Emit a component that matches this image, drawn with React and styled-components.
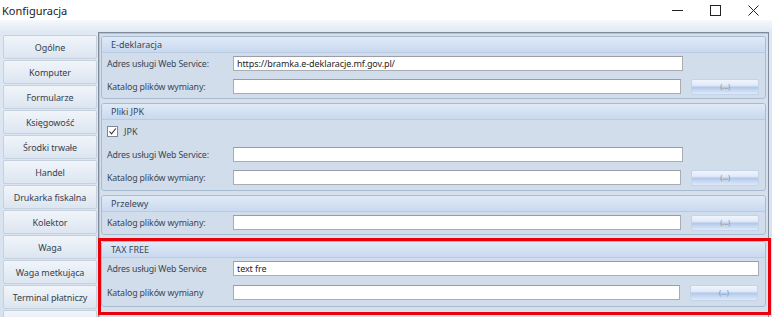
import React from 'react';
import styled, { createGlobalStyle } from 'styled-components';

const GlobalStyle = createGlobalStyle`
  html, body {
    margin: 0;
    padding: 0;
    background: #fff;
    overflow: hidden;
  }
  body {
    font-family: "Noto Sans", "Open Sans", sans-serif;
    color: #3a3f47;
  }
`;

const Window = styled.div`
  width: 772px;
  height: 317px;
  display: flex;
  flex-direction: column;
  overflow: hidden;
`;

const TitleBar = styled.div`
  height: 20px;
  flex-shrink: 0;
  display: flex;
  align-items: center;
  justify-content: space-between;
  background: #fff;
`;

const Title = styled.div`
  padding-left: 2px;
  font-size: 11px;
  color: #1a1a1a;
`;

const Controls = styled.div`
  display: flex;
  align-items: center;
  height: 100%;
`;

const ControlButton = styled.div`
  width: 38px;
  height: 100%;
  display: flex;
  align-items: center;
  justify-content: center;
`;

const Body = styled.div`
  flex: 1;
  display: flex;
  align-items: flex-start;
  gap: 1px;
  padding: 12px 0 0 3px;
  background: linear-gradient(#f6f9fc 0px, #dfe8f3 12px, #d7e2ef 100%);
  overflow: hidden;
`;

const Nav = styled.div`
  width: 94px;
  flex-shrink: 0;
  margin-top: 3px;
  display: flex;
  flex-direction: column;
  gap: 1px;
`;

const NavButton = styled.div`
  height: 24px;
  box-sizing: border-box;
  border: 1px solid #c5d1df;
  border-radius: 2px;
  background: linear-gradient(#f1f5fa, #dce5f0);
  display: flex;
  align-items: center;
  justify-content: center;
  font-size: 9px;
  letter-spacing: -0.1px;
  color: #36434f;
  white-space: nowrap;
`;

const Frame = styled.div`
  width: 671px;
  height: 300px;
  box-sizing: border-box;
  flex-shrink: 0;
  border: 1px solid #7f8b9a;
  box-shadow: inset 1px 1px 0 #b7c3d1;
  padding: 3px 2px;
  background: #d6e0ed;
  display: flex;
  flex-direction: column;
  gap: 4px;
`;

const Section = styled.div`
  box-sizing: border-box;
  flex-shrink: 0;
  border: 1px solid #a9bbd1;
  border-radius: 3px;
  background: #d2ddeb;
  overflow: hidden;
`;

const SectionHeader = styled.div`
  height: 15px;
  padding-left: 9px;
  display: flex;
  align-items: center;
  background: linear-gradient(#e0eaf7, #c9d9ef);
  border-bottom: 1px solid #b9cbe2;
  font-size: 9px;
  color: #3a4654;
`;

const SectionBody = styled.div`
  display: flex;
  flex-direction: column;
  gap: ${(p) => p.$gap || 8}px;
  padding: 3px 6px ${(p) => p.$bottom || 4}px 5px;
`;

const Row = styled.div`
  display: flex;
  align-items: center;
  height: 15px;
`;

const Label = styled.div`
  width: 126px;
  flex-shrink: 0;
  font-size: 8.8px;
  letter-spacing: -0.15px;
  color: #3a4654;
  white-space: nowrap;
`;

const Input = styled.div`
  width: ${(p) => p.$w}px;
  height: 15px;
  box-sizing: border-box;
  border: 1px solid #a9acb2;
  border-top-color: #9a9da3;
  background: #fff;
  font-size: 9px;
  letter-spacing: -0.1px;
  color: #1f1f1f;
  padding-left: 3px;
  display: flex;
  align-items: center;
  white-space: nowrap;
`;

const BrowseButton = styled.div`
  width: 68px;
  height: 16px;
  margin-left: 10px;
  box-sizing: border-box;
  border: 1px solid #c3d3e8;
  border-radius: 2px;
  background: linear-gradient(#f0f5fc 0%, #e1eaf8 38%, #b2c8ea 52%, #c4d6f0 70%, #dfe8f7 100%);
  display: flex;
  align-items: center;
  justify-content: center;
  font-size: 7px;
  color: #7d8da5;
`;

const CheckRow = styled.div`
  display: flex;
  align-items: center;
  gap: 6px;
  height: 16px;
  font-size: 9px;
  color: #3a4654;
`;

const CheckBox = styled.div`
  width: 11px;
  height: 11px;
  box-sizing: border-box;
  border: 1px solid #7b8898;
  background: #fff;
  display: flex;
  align-items: center;
  justify-content: center;
`;

const Highlight = styled.div`
  flex-shrink: 0;
  border: 3px solid #e8000b;
  margin: -1px -5px 0 -3px;
  padding: 0 2px 5px 0;
`;

const navItems = [
  'Ogólne',
  'Komputer',
  'Formularze',
  'Księgowość',
  'Środki trwałe',
  'Handel',
  'Drukarka fiskalna',
  'Kolektor',
  'Waga',
  'Waga metkująca',
  'Terminal płatniczy',
  '',
];

const App = () => {
  return (
    <Window>
      <GlobalStyle />
      <TitleBar>
        <Title>Konfiguracja</Title>
        <Controls>
          <ControlButton>
            <svg width="11" height="11" viewBox="0 0 11 11">
              <line x1="0" y1="5.5" x2="11" y2="5.5" stroke="#222" strokeWidth="1" />
            </svg>
          </ControlButton>
          <ControlButton>
            <svg width="11" height="11" viewBox="0 0 11 11">
              <rect x="0.5" y="0.5" width="10" height="10" fill="none" stroke="#222" strokeWidth="1" />
            </svg>
          </ControlButton>
          <ControlButton>
            <svg width="11" height="11" viewBox="0 0 11 11">
              <path d="M0.5 0.5 L10.5 10.5 M10.5 0.5 L0.5 10.5" stroke="#222" strokeWidth="1" />
            </svg>
          </ControlButton>
        </Controls>
      </TitleBar>
      <Body>
        <Nav>
          {navItems.map((item, i) => (
            <NavButton key={i}>{item}</NavButton>
          ))}
        </Nav>
        <Frame>
          <Section>
            <SectionHeader>E-deklaracja</SectionHeader>
            <SectionBody>
              <Row>
                <Label>Adres usługi Web Service:</Label>
                <Input $w={450}>https://bramka.e-deklaracje.mf.gov.pl/</Input>
              </Row>
              <Row>
                <Label>Katalog plików wymiany:</Label>
                <Input $w={450} />
                <BrowseButton>(...)</BrowseButton>
              </Row>
            </SectionBody>
          </Section>

          <Section>
            <SectionHeader>Pliki JPK</SectionHeader>
            <SectionBody $bottom={5}>
              <CheckRow>
                <CheckBox>
                  <svg width="9" height="9" viewBox="0 0 9 9">
                    <path d="M1.5 4.5 L3.5 6.8 L7.8 1.5" fill="none" stroke="#333" strokeWidth="1.1" />
                  </svg>
                </CheckBox>
                JPK
              </CheckRow>
              <Row>
                <Label>Adres usługi Web Service:</Label>
                <Input $w={450} />
              </Row>
              <Row>
                <Label>Katalog plików wymiany:</Label>
                <Input $w={450} />
                <BrowseButton>(...)</BrowseButton>
              </Row>
            </SectionBody>
          </Section>

          <Section>
            <SectionHeader>Przelewy</SectionHeader>
            <SectionBody $bottom={4}>
              <Row>
                <Label>Katalog plików wymiany:</Label>
                <Input $w={450} />
                <BrowseButton>(...)</BrowseButton>
              </Row>
            </SectionBody>
          </Section>

          <Highlight>
            <Section>
              <SectionHeader>TAX FREE</SectionHeader>
              <SectionBody $gap={9} $bottom={6}>
                <Row>
                  <Label>Adres usługi Web Service</Label>
                  <Input $w={527}>text fre</Input>
                </Row>
                <Row>
                  <Label>Katalog plików wymiany</Label>
                  <Input $w={447} />
                  <BrowseButton>(...)</BrowseButton>
                </Row>
              </SectionBody>
            </Section>
          </Highlight>
        </Frame>
      </Body>
    </Window>
  );
};

export default App;
